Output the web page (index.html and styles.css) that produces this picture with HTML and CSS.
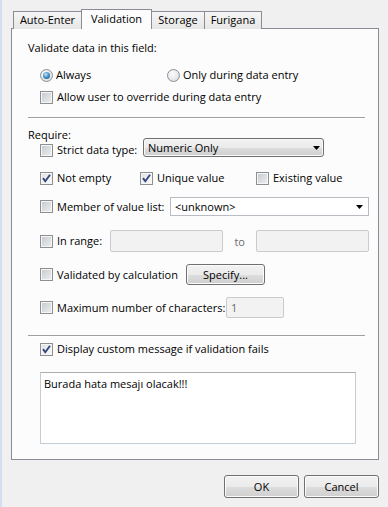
FILE: index.html
```html
<!DOCTYPE html>
<html lang="en">
<head>
    <meta charset="UTF-8">
    <meta name="viewport" content="width=device-width, initial-scale=1.0">
    <title>Field Options - Validation</title>
    <link rel="stylesheet" href="styles.css">
</head>
<body>
    <div class="window">
        <div class="tabs">
            <div class="tab tab-auto">Auto-Enter</div>
            <div class="tab tab-val active">Validation</div>
            <div class="tab tab-sto">Storage</div>
            <div class="tab tab-furi">Furigana</div>
        </div>

        <div class="panel">
            <div class="line">Validate data in this field:</div>
            <div class="row indent r-radios">
                <label class="opt w-always"><span class="radio on"></span>Always</label>
                <label class="opt"><span class="radio"></span>Only during data entry</label>
            </div>
            <div class="row indent r-allow">
                <label class="opt"><span class="cb"></span>Allow user to override during data entry</label>
            </div>

            <div class="sep sep-top"></div>

            <div class="line r-require">Require:</div>
            <div class="row indent r-strict">
                <label class="opt w-strict"><span class="cb"></span>Strict data type:</label>
                <div class="combo combo-btn">
                    <span>Numeric Only</span>
                    <svg width="7" height="4" viewBox="0 0 7 4"><polygon points="0,0 7,0 3.5,4" fill="#000"/></svg>
                </div>
            </div>
            <div class="row indent r-empty">
                <label class="opt w-notempty"><span class="cb checked"><svg width="11" height="11" viewBox="0 0 11 11"><path d="M2 5.2 L4.3 8.2 L9 1.8" fill="none" stroke="#34487a" stroke-width="1.9"/></svg></span>Not empty</label>
                <label class="opt w-unique"><span class="cb checked"><svg width="11" height="11" viewBox="0 0 11 11"><path d="M2 5.2 L4.3 8.2 L9 1.8" fill="none" stroke="#34487a" stroke-width="1.9"/></svg></span>Unique value</label>
                <label class="opt"><span class="cb"></span>Existing value</label>
            </div>
            <div class="row indent r-member">
                <label class="opt w-member"><span class="cb"></span>Member of value list:</label>
                <div class="combo combo-list">
                    <span>&lt;unknown&gt;</span>
                    <svg width="7" height="4" viewBox="0 0 7 4"><polygon points="0,0 7,0 3.5,4" fill="#000"/></svg>
                </div>
            </div>
            <div class="row indent r-range">
                <label class="opt w-range"><span class="cb"></span>In range:</label>
                <div class="field range-from"></div>
                <div class="to">to</div>
                <div class="field range-to"></div>
            </div>
            <div class="row indent r-calc">
                <label class="opt w-calc"><span class="cb"></span>Validated by calculation</label>
                <button type="button" class="btn btn-specify">Specify...</button>
            </div>
            <div class="row indent r-max">
                <label class="opt w-max"><span class="cb"></span>Maximum number of characters:</label>
                <div class="field max-chars">1</div>
            </div>

            <div class="sep sep-bottom"></div>

            <div class="row indent r-custom">
                <label class="opt"><span class="cb checked"><svg width="11" height="11" viewBox="0 0 11 11"><path d="M2 5.2 L4.3 8.2 L9 1.8" fill="none" stroke="#34487a" stroke-width="1.9"/></svg></span>Display custom message if validation fails</label>
            </div>
            <div class="message">Burada hata mesajı olacak!!!</div>
        </div>

        <div class="buttons">
            <button type="button" class="btn btn-dialog">OK</button>
            <button type="button" class="btn btn-dialog">Cancel</button>
        </div>
    </div>
</body>
</html>
```

FILE: styles.css
```css
body { margin: 0; font-family: "Open Sans", "Liberation Sans", sans-serif; font-size: 11px; color: #000; }
.window { width: 388px; height: 507px; box-sizing: border-box; background: #f0f0f0; border-left: 2px solid #d2dff0; padding: 9px 0 0 9px; }

/* tabs */
.tabs { display: flex; align-items: flex-end; height: 20px; padding-left: 2px; margin-bottom: -1px; }
.tab { box-sizing: border-box; height: 18px; line-height: 16px; text-align: center; border: 1px solid #898c95; border-bottom: none; background: linear-gradient(#f6f6f6, #e6e6e6); margin-left: -1px; }
.tab:first-child { margin-left: 0; }
.tab.active { position: relative; z-index: 1; height: 20px; line-height: 17px; background: #fcfcfc; }
.tab-auto { width: 69px; }
.tab-val { width: 71px; }
.tab-sto { width: 54px; }
.tab-furi { width: 58px; }

.panel { box-sizing: border-box; width: 368px; height: 432px; border: 1px solid #898c95; background: #fcfcfc; padding: 11px 9px 0 16px; }

.line { height: 16px; line-height: 16px; }
.row { display: flex; align-items: center; height: 16px; }
.indent { margin-left: 12px; }
.opt { display: flex; align-items: center; height: 16px; line-height: 16px; white-space: nowrap; }

/* check boxes and radios */
.cb { box-sizing: border-box; width: 13px; height: 13px; margin-right: 4px; border: 1px solid #8e8f8f; background: linear-gradient(135deg, #c4c8ce, #eef0f2); box-shadow: inset 0 0 0 1px #f6f6f6; display: flex; align-items: center; justify-content: center; flex: none; }
.cb.checked { background: linear-gradient(135deg, #dfe2e6, #fafafa); }
.radio { box-sizing: border-box; width: 13px; height: 13px; margin-right: 3px; border-radius: 50%; border: 1px solid #8c8f94; background: radial-gradient(circle at 40% 35%, #fdfdfd, #d5d7da); display: flex; align-items: center; justify-content: center; flex: none; }
.radio.on::after { content: ""; width: 7px; height: 7px; border-radius: 50%; background: radial-gradient(circle at 40% 35%, #c2e6fa 0, #3f8fc6 50%, #164a73 100%); }

.sep { height: 0; border-top: 1px solid #a0a0a0; border-bottom: 1px solid #fff; margin-right: 4px; }

.r-radios { margin-top: 11px; }
.w-always { width: 127px; }
.r-allow { margin-top: 6px; }
.sep-top { margin-top: 12px; }
.r-require { margin-top: 8px; }

.r-strict { margin-top: -5px; height: 19px; align-items: flex-end; }
.w-strict { width: 103px; margin-bottom: -1px; }
.combo { box-sizing: border-box; height: 19px; display: flex; align-items: center; justify-content: space-between; }
.combo-btn { width: 181px; padding: 0 3px 0 4px; border: 1px solid #707070; border-radius: 3px; background: linear-gradient(#f2f2f2 0%, #ebebeb 50%, #dddddd 51%, #cfcfcf 100%); box-shadow: inset 0 0 0 1px #f8f8f8; }

.r-empty { margin-top: 13px; }
.w-notempty { width: 100px; }
.w-unique { width: 116px; }

.r-member { margin-top: 11px; height: 19px; }
.w-member { width: 130px; }
.combo-list { width: 199px; padding: 0 5px 0 4px; border: 1px solid #b9bcc2; background: #fff; }

.r-range { margin-top: 14px; height: 22px; }
.w-range { width: 70px; }
.field { box-sizing: border-box; border: 1px solid #c9cbce; border-radius: 2px; background: #f2f2f2; }
.range-from { width: 114px; height: 22px; }
.to { width: 33px; padding-left: 11px; box-sizing: border-box; color: #6d6d6d; }
.range-to { width: 113px; height: 22px; }

.r-calc { margin-top: 12px; height: 21px; }
.w-calc { width: 146px; }
.btn { box-sizing: border-box; font: inherit; color: #000; border: 1px solid #707070; border-radius: 3px; background: linear-gradient(#f2f2f2 0%, #ebebeb 50%, #dddddd 51%, #cfcfcf 100%); box-shadow: inset 0 0 0 1px #fbfbfb; padding: 0; }
.btn-specify { width: 79px; height: 21px; }

.r-max { margin-top: 12px; height: 21px; }
.w-max { width: 186px; }
.max-chars { width: 58px; height: 21px; line-height: 19px; padding-left: 4px; color: #6d6d6d; }

.sep-bottom { margin-top: 17px; }
.r-custom { margin-top: 4px; }

.message { box-sizing: border-box; width: 316px; height: 72px; margin: 15px 0 0 12px; padding: 3px 3px; line-height: 16px; background: #fff; border: 1px solid #c4ccd6; border-top-color: #abadb3; }

.buttons { display: flex; justify-content: flex-end; gap: 5px; margin-top: 15px; padding-right: 9px; }
.btn-dialog { width: 75px; height: 23px; }
```
